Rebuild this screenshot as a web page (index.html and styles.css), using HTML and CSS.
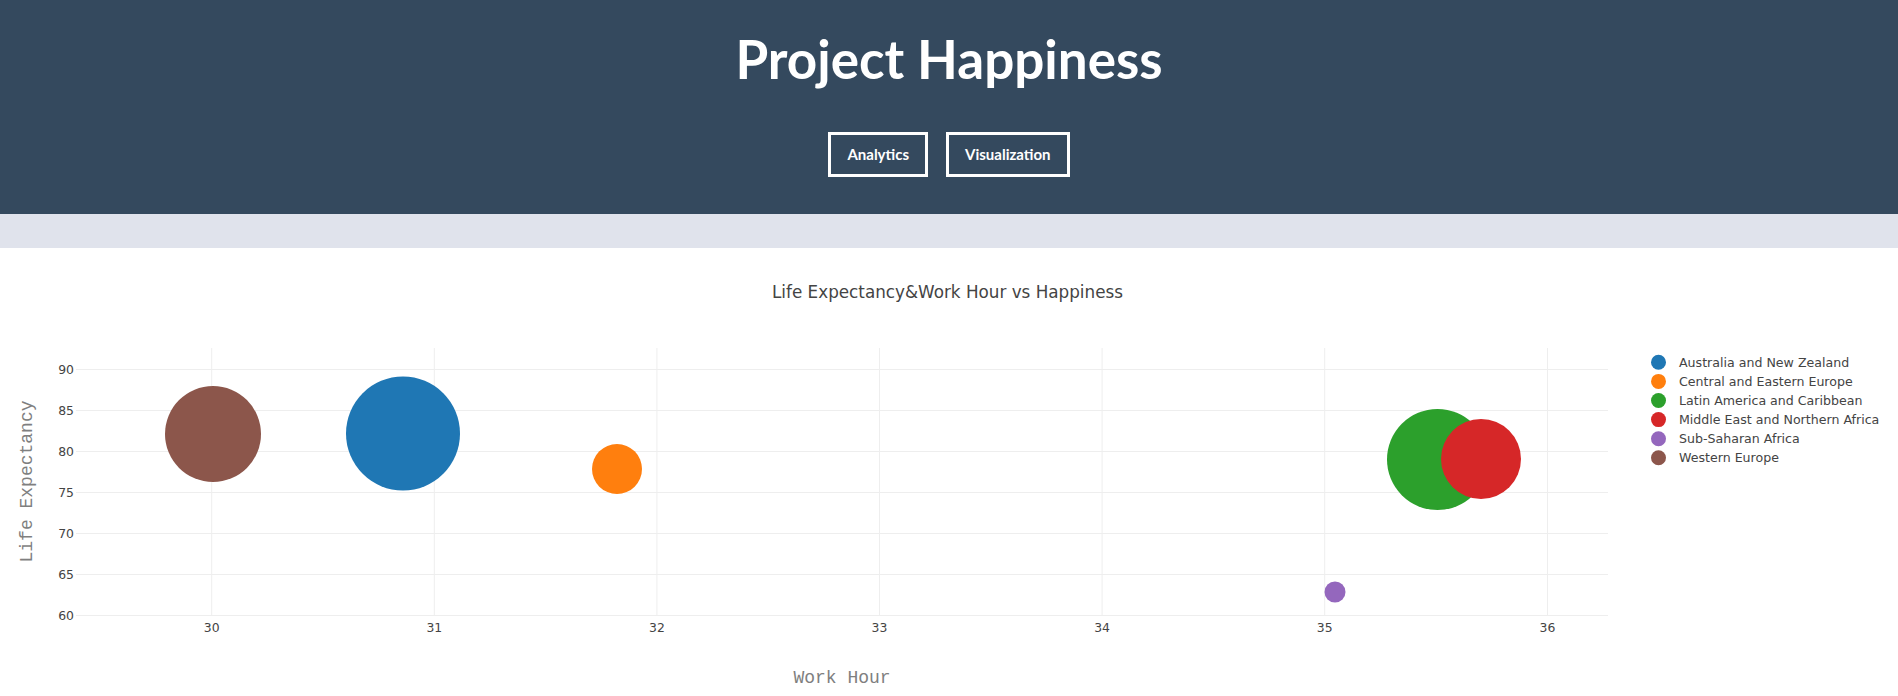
FILE: index.html
```html
<!DOCTYPE html>
<html lang="en">
<head>
<meta charset="utf-8">
<title>Project Happiness</title>
<link rel="stylesheet" href="styles.css">
</head>
<body>
<header class="hero">
  <h1 class="hero-title">Project Happiness</h1>
  <nav class="hero-nav">
    <a class="hero-btn" href="#">Analytics</a>
    <a class="hero-btn" href="#">Visualization</a>
  </nav>
</header>
<div class="band"></div>
<main class="chart-wrap">
  <svg class="chart" width="1898" height="448" viewBox="0 248 1898 448" xmlns="http://www.w3.org/2000/svg">
    <text class="chart-title" x="947.5" y="298.3" text-anchor="middle">Life Expectancy&amp;Work Hour vs Happiness</text>

    <g class="grid">
      <line x1="211.7" y1="348" x2="211.7" y2="615.5"/>
      <line x1="434.3" y1="348" x2="434.3" y2="615.5"/>
      <line x1="656.9" y1="348" x2="656.9" y2="615.5"/>
      <line x1="879.5" y1="348" x2="879.5" y2="615.5"/>
      <line x1="1102.1" y1="348" x2="1102.1" y2="615.5"/>
      <line x1="1324.7" y1="348" x2="1324.7" y2="615.5"/>
      <line x1="1547.5" y1="348" x2="1547.5" y2="615.5"/>
      <line x1="76" y1="369.5" x2="1608" y2="369.5"/>
      <line x1="76" y1="410.5" x2="1608" y2="410.5"/>
      <line x1="76" y1="451.5" x2="1608" y2="451.5"/>
      <line x1="76" y1="492.5" x2="1608" y2="492.5"/>
      <line x1="76" y1="533.5" x2="1608" y2="533.5"/>
      <line x1="76" y1="574.5" x2="1608" y2="574.5"/>
      <line x1="76" y1="615.5" x2="1608" y2="615.5"/>
    </g>

    <g class="ytick" text-anchor="end">
      <text x="74" y="373.6">90</text>
      <text x="74" y="414.6">85</text>
      <text x="74" y="455.6">80</text>
      <text x="74" y="496.6">75</text>
      <text x="74" y="537.6">70</text>
      <text x="74" y="578.6">65</text>
      <text x="74" y="619.6">60</text>
    </g>
    <g class="xtick" text-anchor="middle">
      <text x="211.7" y="631.5">30</text>
      <text x="434.3" y="631.5">31</text>
      <text x="656.9" y="631.5">32</text>
      <text x="879.5" y="631.5">33</text>
      <text x="1102.1" y="631.5">34</text>
      <text x="1324.7" y="631.5">35</text>
      <text x="1547.5" y="631.5">36</text>
    </g>

    <g class="bubbles">
      <circle cx="403" cy="433.5" r="57" fill="#1f77b4"/>
      <circle cx="617" cy="469" r="25" fill="#ff7f0e"/>
      <circle cx="1437.5" cy="459.5" r="50.5" fill="#2ca02c"/>
      <circle cx="1481" cy="459" r="40" fill="#d62728"/>
      <circle cx="1335" cy="592" r="10.5" fill="#9467bd"/>
      <circle cx="213" cy="434" r="48" fill="#8c564b"/>
    </g>

    <text class="axis-title" x="842" y="683" text-anchor="middle">Work Hour</text>
    <text class="axis-title" transform="translate(31.5 481.5) rotate(-90)" text-anchor="middle">Life Expectancy</text>

    <g class="legend">
      <circle cx="1658.5" cy="362.3" r="7.5" fill="#1f77b4"/>
      <text x="1679" y="366.8">Australia and New Zealand</text>
      <circle cx="1658.5" cy="381.4" r="7.5" fill="#ff7f0e"/>
      <text x="1679" y="385.9">Central and Eastern Europe</text>
      <circle cx="1658.5" cy="400.5" r="7.5" fill="#2ca02c"/>
      <text x="1679" y="405">Latin America and Caribbean</text>
      <circle cx="1658.5" cy="419.6" r="7.5" fill="#d62728"/>
      <text x="1679" y="424.1">Middle East and Northern Africa</text>
      <circle cx="1658.5" cy="438.7" r="7.5" fill="#9467bd"/>
      <text x="1679" y="443.2">Sub-Saharan Africa</text>
      <circle cx="1658.5" cy="457.8" r="7.5" fill="#8c564b"/>
      <text x="1679" y="462.3">Western Europe</text>
    </g>
  </svg>
</main>
</body>
</html>
```

FILE: styles.css
```css
html, body {
  margin: 0;
  padding: 0;
  background: #ffffff;
}

body {
  font-family: "Lato", "Liberation Sans", sans-serif;
  overflow: hidden;
}

.hero {
  background: #34495e;
  color: #ffffff;
  padding: 26px 0 37px;
  display: flex;
  flex-direction: column;
  align-items: center;
}

.hero-title {
  margin: 0;
  font-family: "Lato", sans-serif;
  font-weight: 700;
  font-size: 53px;
  line-height: 65px;
  color: #ffffff;
}

.hero-nav {
  margin-top: 41px;
  display: flex;
  gap: 18px;
}

.hero-btn {
  display: block;
  border: 3px solid #ffffff;
  padding: 11px 16px;
  font-family: "Lato", sans-serif;
  font-weight: 700;
  font-size: 15px;
  line-height: 17px;
  color: #ffffff;
  text-decoration: none;
}

.band {
  height: 34px;
  background: #e0e3ec;
}

.chart-wrap {
  display: block;
}

.chart {
  display: block;
}

.chart-title {
  font-family: "DejaVu Sans", "Verdana", sans-serif;
  font-size: 16.8px;
  fill: #444444;
}

.grid line {
  stroke: #eeeeee;
  stroke-width: 1;
}

.ytick text,
.xtick text {
  font-family: "DejaVu Sans", "Verdana", sans-serif;
  font-size: 12.4px;
  fill: #444444;
}

.axis-title {
  font-family: "Liberation Mono", "Courier New", monospace;
  font-size: 18px;
  fill: #7f7f7f;
}

.legend text {
  font-family: "DejaVu Sans", "Verdana", sans-serif;
  font-size: 12.6px;
  fill: #444444;
}
```
